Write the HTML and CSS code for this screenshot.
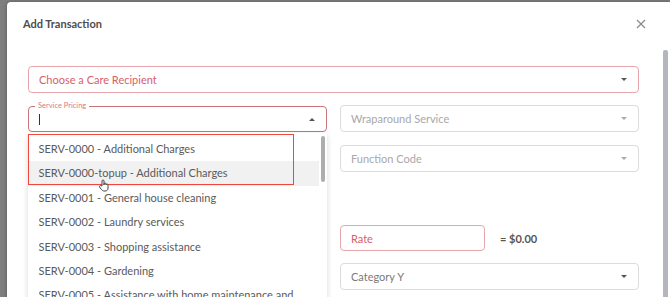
FILE: index.html
```html
<!DOCTYPE html>
<html lang="en">

<head>
    <meta charset="UTF-8">
    <meta name="viewport" content="width=device-width, initial-scale=1.0">
    <title>Add Transaction</title>

    <link rel="stylesheet" href="styles.css">
</head>

<body>
    <div class="modal">
        <div class="modal-body">
            <div class="modal-header">
                <h2>Add Transaction</h2>
                <button class="close" aria-label="Close">
                    <svg width="10" height="10" viewBox="0 0 10 10">
                        <path d="M1 1 L9 9 M9 1 L1 9" stroke="#8a8a8a" stroke-width="1.2" fill="none" />
                    </svg>
                </button>
            </div>

            <div class="select select-full error">
                <span>Choose a Care Recipient</span>
                <span class="caret"></span>
            </div>

            <div class="columns">
                <div class="col">
                    <div class="field focused">
                        <label>Service Pricing</label>
                        <span class="text-cursor"></span>
                        <span class="caret caret-up"></span>

                        <div class="dropdown">
                            <ul>
                                <li>SERV-0000 - Additional Charges</li>
                                <li class="hover">SERV-0000-topup - Additional Charges</li>
                                <li>SERV-0001 - General house cleaning</li>
                                <li>SERV-0002 - Laundry services</li>
                                <li>SERV-0003 - Shopping assistance</li>
                                <li>SERV-0004 - Gardening</li>
                                <li>SERV-0005 - Assistance with home maintenance and</li>
                            </ul>
                            <div class="dropdown-scroll"></div>
                            <div class="highlight-box"></div>
                            <svg class="hand" width="12" height="13" viewBox="0 0 12 13">
                                <path d="M4 7 V2 a1 1 0 0 1 2 0 V6 V5 a1 1 0 0 1 2 0 V6 a1 1 0 0 1 2 0 V9 c0 2 -1 3 -3 3 H6 c-1 0 -2 -1 -3 -2 L1.5 8 a1 1 0 0 1 1.5 -1.2 Z"
                                    fill="#fff" stroke="#444" stroke-width="1" stroke-linejoin="round" />
                            </svg>
                        </div>
                    </div>
                </div>

                <div class="col">
                    <div class="select">
                        <span class="placeholder">Wraparound Service</span>
                        <span class="caret caret-light"></span>
                    </div>
                    <div class="select">
                        <span class="placeholder">Function Code</span>
                        <span class="caret caret-light"></span>
                    </div>
                    <div class="rate-row">
                        <div class="input error">Rate</div>
                        <span class="total">= $0.00</span>
                    </div>
                    <div class="select">
                        <span class="value">Category Y</span>
                        <span class="caret"></span>
                    </div>
                </div>
            </div>
        </div>
        <div class="scrollbar">
            <div class="thumb"></div>
        </div>
    </div>
</body>

</html>
```

FILE: styles.css
```css
body {
    font-family: Lato, "Noto Sans", sans-serif;
    margin: 0;
    padding: 2px 0 0 7px;
    background-color: #7f7f7f;
    height: 297px;
    overflow: hidden;
    box-sizing: border-box;
}

.modal {
    display: flex;
    background-color: #fff;
    border-radius: 4px 0 0 0;
    height: 320px;
    box-shadow: 0 0 4px rgba(0, 0, 0, 0.3);
}

.modal-body {
    width: 632px;
    padding-left: 21px;
}

.modal-header {
    display: flex;
    justify-content: space-between;
    align-items: center;
    padding-top: 15px;
    margin-left: -5px;
}

.modal-header h2 {
    margin: 0;
    font-size: 11px;
    line-height: 14px;
    font-weight: 700;
    color: #4d4d4d;
}

.close {
    background: none;
    border: none;
    padding: 0;
    margin-right: 13px;
    width: 12px;
    height: 12px;
    display: flex;
    align-items: center;
    justify-content: center;
    cursor: pointer;
}

.select,
.input,
.field {
    position: relative;
    box-sizing: border-box;
    height: 27px;
    border: 1px solid #dcdcdc;
    border-radius: 4px;
    padding: 0 10px;
    display: flex;
    align-items: center;
    justify-content: space-between;
    font-size: 11px;
    color: #777;
}

.select-full {
    width: 611px;
    margin-top: 35px;
}

.error {
    border-color: #e7a6ac;
    color: #d7606b;
}

.placeholder {
    color: #a8a8a8;
}

.value {
    color: #7a7a7a;
}

.caret {
    width: 0;
    height: 0;
    border-left: 3px solid transparent;
    border-right: 3px solid transparent;
    border-top: 3px solid #555;
    margin-right: 1px;
}

.caret-light {
    border-top-color: #aaa;
}

.caret-up {
    border-top: none;
    border-bottom: 3px solid #555;
}

.columns {
    display: grid;
    grid-template-columns: 299px 299px;
    column-gap: 13px;
    margin-top: 12px;
}

.col .select {
    margin-bottom: 13px;
}

.field.focused {
    height: 26px;
    margin-top: 1px;
    border: 1.5px solid #c9737b;
}

.field label {
    position: absolute;
    top: -6px;
    left: 6px;
    padding: 0 3px;
    background-color: #fff;
    font-size: 7.5px;
    line-height: 10px;
    color: #dd7a82;
}

.text-cursor {
    width: 1px;
    height: 11px;
    background-color: #333;
}

.dropdown {
    position: absolute;
    top: 26px;
    left: -1.5px;
    width: 299px;
    height: 200px;
    background-color: #fff;
    box-shadow: 0 2px 6px rgba(0, 0, 0, 0.15);
    padding-top: 4px;
    box-sizing: border-box;
}

.dropdown ul {
    list-style: none;
    margin: 0;
    padding: 0;
}

.dropdown li {
    height: 24.4px;
    line-height: 24.4px;
    padding-left: 11px;
    font-size: 11px;
    color: #5a5a5a;
    white-space: nowrap;
    margin-right: 8px;
}

.dropdown li.hover {
    background-color: #f1f1f1;
}

.dropdown-scroll {
    position: absolute;
    top: 3px;
    right: 2px;
    width: 4px;
    height: 46px;
    border-radius: 2px;
    background-color: #aeaeae;
}

.highlight-box {
    position: absolute;
    top: 1px;
    left: 0;
    width: 266px;
    height: 51px;
    box-sizing: border-box;
    border: 1.5px solid #f0463c;
}

.hand {
    position: absolute;
    top: 46px;
    left: 70px;
}

.rate-row {
    display: flex;
    align-items: center;
    margin-top: 53px;
    margin-bottom: 12px;
}

.input {
    width: 145px;
    height: 26px;
}

.total {
    margin-left: 15px;
    font-size: 11px;
    font-weight: 700;
    color: #555;
}

.scrollbar {
    margin-left: auto;
    width: 7px;
    padding-top: 48px;
}

.thumb {
    width: 5px;
    height: 280px;
    background-color: #b3b6bd;
    border-radius: 2px;
}
```
